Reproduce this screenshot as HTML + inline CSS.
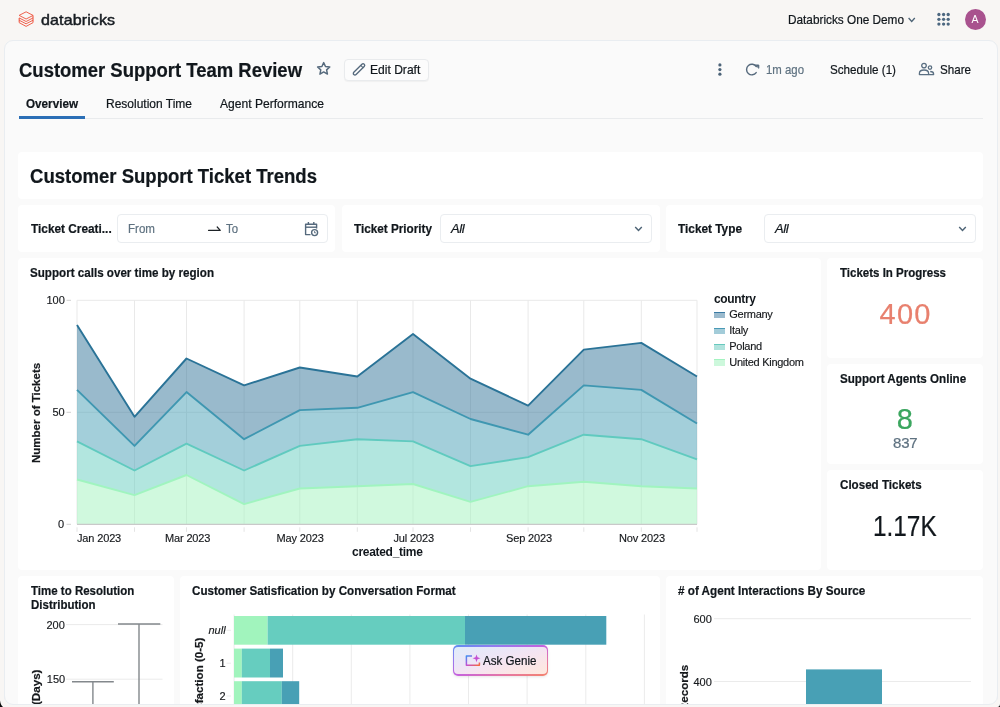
<!DOCTYPE html>
<html>
<head>
<meta charset="utf-8">
<title>Customer Support Team Review</title>
<style>
*{box-sizing:border-box;margin:0;padding:0}
html,body{width:1000px;height:707px;overflow:hidden;background:#f8f6f4;font-family:"Liberation Sans",sans-serif;color:#11171c}
#root{position:absolute;left:0;top:0;width:1000px;height:707px;overflow:hidden;background:#f8f6f4;will-change:transform}
.abs{position:absolute}
.t{position:absolute;white-space:nowrap;line-height:1;font-size:13px;transform-origin:0 50%;-webkit-text-stroke:0.22px currentColor}
.b{font-weight:bold}
.g{color:#5f7281}
.ax{font-size:11px;color:#16191c;-webkit-text-stroke:0.15px currentColor}
.nx{-webkit-text-stroke:0}
#panel{position:absolute;left:4px;top:40px;width:994px;height:680px;background:#fafafa;border:1px solid #e9edf1;border-radius:9px}
.card{position:absolute;background:#fff;border-radius:4px}
.inp{position:absolute;background:#fff;border:1px solid #eaedf0;border-radius:4px}
svg{position:absolute;overflow:visible}
.rot{position:absolute;white-space:nowrap;line-height:1;font-size:11.6px;font-weight:bold;transform-origin:0 0;transform:rotate(-90deg);-webkit-text-stroke:0.2px currentColor;color:#16191c}
</style>
</head>
<body>
<div id="root">
<!-- TOP BAR -->
<svg id="logo" style="left:18px;top:11px" width="17" height="17" viewBox="0 0 17 17" fill="none" stroke="#ee5a45" stroke-width="0.95" stroke-linejoin="round">
<path d="M8.1 0.8 L15.1 4.4 L8.1 8 L1.1 4.4 Z"/>
<path d="M1.1 6.9 L8.1 10.5 L15.1 6.9"/>
<path d="M1.1 9.2 L8.1 12.8 L15.1 9.2"/>
<path d="M1.1 11.6 L8.1 15.4 L15.1 11.6"/>
<path d="M1.2 6.9 V11.6 M15 4.6 V11.6" stroke-width="1.1"/>
</svg>
<div class="t" id="brand" style="left:41px;top:12px;font-size:15px;letter-spacing:0.1px;color:#161b20;-webkit-text-stroke:0.45px #161b20;transform:scaleX(1.07)">databricks</div>
<div class="t" id="ws" style="left:788px;top:13px;transform:scaleX(0.9070)">Databricks One Demo</div>
<svg style="left:907px;top:16px" width="10" height="8" viewBox="0 0 10 8" fill="none" stroke="#4d6375" stroke-width="1.3"><path d="M1.6 2 L4.7 5.5 L7.8 2"/></svg>
<svg style="left:936px;top:12px" width="15" height="15" viewBox="0 0 15 15" fill="#4d6880">
<circle cx="2.9" cy="2.5" r="1.65"/><circle cx="7.6" cy="2.5" r="1.65"/><circle cx="12.2" cy="2.5" r="1.65"/>
<circle cx="2.9" cy="7.3" r="1.65"/><circle cx="7.6" cy="7.3" r="1.65"/><circle cx="12.2" cy="7.3" r="1.65"/>
<circle cx="2.9" cy="12.1" r="1.65"/><circle cx="7.6" cy="12.1" r="1.65"/><circle cx="12.2" cy="12.1" r="1.65"/>
</svg>
<div class="abs" style="left:964.5px;top:8.5px;width:21.5px;height:21.5px;border-radius:50%;background:#a9528e"></div>
<div class="t nx" id="ava" style="left:971.6px;top:14.2px;font-size:10.5px;color:#fff">A</div>

<div id="panel"></div>

<!-- HEADER -->
<div class="t b" id="title" style="left:19px;top:60px;font-size:20px;transform:scaleX(0.9238)">Customer Support Team Review</div>
<svg style="left:316px;top:61.2px" width="15" height="15" viewBox="0 0 16 16" fill="none" stroke="#55697c" stroke-width="1.55" stroke-linejoin="round"><path d="M8.2 1.7 L10.1 5.9 L14.7 6.4 L11.3 9.5 L12.2 14 L8.2 11.7 L4.2 14 L5.1 9.5 L1.7 6.4 L6.3 5.9 Z"/></svg>
<div class="abs" id="editbtn" style="left:344px;top:59px;width:85px;height:22px;border:1px solid #e9ebed;border-radius:4px;background:#fcfcfc;box-shadow:0 1px 1px rgba(0,0,0,0.04)"></div>
<svg style="left:352.2px;top:62px" width="14.3" height="14.3" viewBox="0 0 15 15" fill="none" stroke="#55697c" stroke-width="1.4" stroke-linejoin="round" stroke-linecap="round"><path d="M1.9 10.8 L10.4 2.3 A1.65 1.65 0 0 1 12.8 4.7 L4.3 13.2 A1.65 1.65 0 0 1 1.9 10.8 Z"/><path d="M9.2 3.6 L11.5 5.9" stroke-width="1.1"/></svg>
<div class="t" id="edittxt" style="left:370.4px;top:63px;transform:scaleX(0.9283)">Edit Draft</div>
<svg style="left:716px;top:62px" width="8" height="16" viewBox="0 0 8 16" fill="#4c6378"><circle cx="3.9" cy="2.9" r="1.6"/><circle cx="3.9" cy="7.55" r="1.6"/><circle cx="3.9" cy="12.2" r="1.6"/></svg>
<svg style="left:745px;top:62px" width="16" height="16" viewBox="0 0 16 16" fill="none" stroke="#55697c" stroke-width="1.4" stroke-linecap="round" stroke-linejoin="round"><path d="M11.3 4.6 A5.3 5.3 0 1 0 11.2 10.6"/><path d="M10.9 3 H13.8 V5.9 Z" fill="#55697c" stroke-width="1"/></svg>
<div class="t g" id="ago" style="left:766px;top:63px;transform:scaleX(0.8761)">1m ago</div>
<div class="t" id="sched" style="left:830px;top:63px;transform:scaleX(0.8953)">Schedule (1)</div>
<svg style="left:918px;top:62px" width="17" height="14" viewBox="0 0 17 14" fill="none" stroke="#5a6f82" stroke-width="1.3"><circle cx="6" cy="3.6" r="2.3"/><path d="M1.4 12.6 V11.5 C1.4 9.2 3.4 8 6 8 C8.6 8 10.6 9.2 10.6 11.5 V12.6 Z" stroke-linejoin="round"/><circle cx="12" cy="5.6" r="1.7"/><path d="M10.6 12.6 H15.6 V11.9 C15.6 10.3 14 9.5 12.2 9.5" stroke-linejoin="round"/></svg>
<div class="t" id="share" style="left:939.7px;top:63px;transform:scaleX(0.8933)">Share</div>

<!-- TABS -->
<div class="abs" style="left:19px;top:118px;width:964px;height:1px;background:#e9ebed"></div>
<div class="abs" style="left:19px;top:116.4px;width:66px;height:2.6px;background:#2b6fb6"></div>
<div class="t b" id="tab1" style="left:26px;top:97px;transform:scaleX(0.8992)">Overview</div>
<div class="t" id="tab2" style="left:106px;top:97px;transform:scaleX(0.9226)">Resolution Time</div>
<div class="t" id="tab3" style="left:220px;top:97px;transform:scaleX(0.9284)">Agent Performance</div>

<!-- TITLE CARD -->
<div class="card" style="left:18px;top:152px;width:965px;height:47px"></div>
<div class="t b" id="h1" style="left:30px;top:166px;font-size:20px;transform:scaleX(0.9267)">Customer Support Ticket Trends</div>

<!-- FILTERS -->
<div class="card" style="left:18px;top:205px;width:317px;height:47px"></div>
<div class="card" style="left:342px;top:205px;width:318px;height:47px"></div>
<div class="card" style="left:666px;top:205px;width:317px;height:47px"></div>
<div class="t b" id="f1" style="left:30.7px;top:222px;transform:scaleX(0.9104)">Ticket Creati...</div>
<div class="inp" style="left:116.5px;top:214px;width:211px;height:29px"></div>
<div class="t g" id="from" style="left:128px;top:222px;transform:scaleX(0.8898)">From</div>
<svg style="left:207px;top:224px" width="15" height="9" viewBox="0 0 15 9" fill="none" stroke="#1d2226" stroke-width="1.2" stroke-linecap="round" stroke-linejoin="round"><path d="M1.5 6.3 H13.3 L10.2 3"/></svg>
<div class="t g" id="to" style="left:226.4px;top:222px;transform:scaleX(0.8737)">To</div>
<svg style="left:304px;top:220.5px" width="16" height="16" viewBox="0 0 16 16" fill="none" stroke="#55697c" stroke-width="1.4" stroke-linejoin="round"><path d="M6.5 13.6 H1.6 V3.2 H12.6 V7.4"/><path d="M1.6 6.2 H12.6"/><path d="M4.4 1 V4 M9.8 1 V4"/><circle cx="10.6" cy="11.6" r="3"/><path d="M10.6 10.2 V11.8 H11.8" stroke-width="1"/></svg>

<div class="t b" id="f2" style="left:354px;top:222px;transform:scaleX(0.9021)">Ticket Priority</div>
<div class="inp" style="left:440px;top:214px;width:211.5px;height:29px"></div>
<div class="t" id="all1" style="left:451px;top:222px;font-style:italic;letter-spacing:-0.4px">All</div>
<svg style="left:633px;top:225px" width="11" height="8" viewBox="0 0 11 8" fill="none" stroke="#4d6375" stroke-width="1.45"><path d="M2.2 2 L5.5 5.4 L8.8 2"/></svg>

<div class="t b" id="f3" style="left:678px;top:222px;transform:scaleX(0.9100)">Ticket Type</div>
<div class="inp" style="left:764px;top:214px;width:211.5px;height:29px"></div>
<div class="t" id="all2" style="left:775px;top:222px;font-style:italic;letter-spacing:-0.4px">All</div>
<svg style="left:957px;top:225px" width="11" height="8" viewBox="0 0 11 8" fill="none" stroke="#4d6375" stroke-width="1.45"><path d="M2.2 2 L5.5 5.4 L8.8 2"/></svg>

<!-- AREA CHART CARD -->
<div class="card" style="left:18px;top:258px;width:803px;height:312px"></div>
<div class="t b" id="c1t" style="left:30px;top:266px;transform:scaleX(0.8937)">Support calls over time by region</div>
<svg style="left:0;top:0" width="1000" height="707" viewBox="0 0 1000 707">
<line x1="77.0" y1="300.3" x2="77.0" y2="524.3" stroke="#e9e9e9" stroke-width="1"/>
<line x1="134.5" y1="300.3" x2="134.5" y2="524.3" stroke="#e9e9e9" stroke-width="1"/>
<line x1="186.5" y1="300.3" x2="186.5" y2="524.3" stroke="#e9e9e9" stroke-width="1"/>
<line x1="244.1" y1="300.3" x2="244.1" y2="524.3" stroke="#e9e9e9" stroke-width="1"/>
<line x1="299.8" y1="300.3" x2="299.8" y2="524.3" stroke="#e9e9e9" stroke-width="1"/>
<line x1="357.3" y1="300.3" x2="357.3" y2="524.3" stroke="#e9e9e9" stroke-width="1"/>
<line x1="413.0" y1="300.3" x2="413.0" y2="524.3" stroke="#e9e9e9" stroke-width="1"/>
<line x1="470.5" y1="300.3" x2="470.5" y2="524.3" stroke="#e9e9e9" stroke-width="1"/>
<line x1="528.1" y1="300.3" x2="528.1" y2="524.3" stroke="#e9e9e9" stroke-width="1"/>
<line x1="583.8" y1="300.3" x2="583.8" y2="524.3" stroke="#e9e9e9" stroke-width="1"/>
<line x1="641.3" y1="300.3" x2="641.3" y2="524.3" stroke="#e9e9e9" stroke-width="1"/>
<line x1="697.0" y1="300.3" x2="697.0" y2="524.3" stroke="#e9e9e9" stroke-width="1"/>
<line x1="77.0" y1="412.3" x2="697.0" y2="412.3" stroke="#e9e9e9" stroke-width="1"/>
<line x1="77.0" y1="300.3" x2="697.0" y2="300.3" stroke="#e9e9e9" stroke-width="1"/>
<path d="M77.0,479.5 L134.5,495.2 L186.5,475.0 L244.1,504.1 L299.8,488.5 L357.3,486.2 L413.0,484.0 L470.5,501.9 L528.1,486.2 L583.8,481.7 L641.3,486.2 L697.0,488.5 L697.0,524.3 L641.3,524.3 L583.8,524.3 L528.1,524.3 L470.5,524.3 L413.0,524.3 L357.3,524.3 L299.8,524.3 L244.1,524.3 L186.5,524.3 L134.5,524.3 L77.0,524.3 Z" fill="#a1f4bd" fill-opacity="0.5"/>
<path d="M77.0,441.4 L134.5,470.5 L186.5,443.7 L244.1,470.5 L299.8,445.9 L357.3,439.2 L413.0,441.4 L470.5,466.1 L528.1,457.1 L583.8,434.7 L641.3,439.2 L697.0,459.3 L697.0,488.5 L641.3,486.2 L583.8,481.7 L528.1,486.2 L470.5,501.9 L413.0,484.0 L357.3,486.2 L299.8,488.5 L244.1,504.1 L186.5,475.0 L134.5,495.2 L77.0,479.5 Z" fill="#66cdbf" fill-opacity="0.5"/>
<path d="M77.0,389.9 L134.5,445.9 L186.5,392.1 L244.1,439.2 L299.8,410.1 L357.3,407.8 L413.0,392.1 L470.5,419.0 L528.1,434.7 L583.8,385.4 L641.3,389.9 L697.0,423.5 L697.0,459.3 L641.3,439.2 L583.8,434.7 L528.1,457.1 L470.5,466.1 L413.0,441.4 L357.3,439.2 L299.8,445.9 L244.1,470.5 L186.5,443.7 L134.5,470.5 L77.0,441.4 Z" fill="#48a0b5" fill-opacity="0.5"/>
<path d="M77.0,324.9 L134.5,416.8 L186.5,358.5 L244.1,385.4 L299.8,367.5 L357.3,376.5 L413.0,333.9 L470.5,378.7 L528.1,405.6 L583.8,349.6 L641.3,342.9 L697.0,376.5 L697.0,423.5 L641.3,389.9 L583.8,385.4 L528.1,434.7 L470.5,419.0 L413.0,392.1 L357.3,407.8 L299.8,410.1 L244.1,439.2 L186.5,392.1 L134.5,445.9 L77.0,389.9 Z" fill="#33759a" fill-opacity="0.5"/>
<path d="M77.0,479.5 L134.5,495.2 L186.5,475.0 L244.1,504.1 L299.8,488.5 L357.3,486.2 L413.0,484.0 L470.5,501.9 L528.1,486.2 L583.8,481.7 L641.3,486.2 L697.0,488.5" fill="none" stroke="#a0f4bf" stroke-width="1.9" stroke-linejoin="round"/>
<path d="M77.0,441.4 L134.5,470.5 L186.5,443.7 L244.1,470.5 L299.8,445.9 L357.3,439.2 L413.0,441.4 L470.5,466.1 L528.1,457.1 L583.8,434.7 L641.3,439.2 L697.0,459.3" fill="none" stroke="#60cabf" stroke-width="1.9" stroke-linejoin="round"/>
<path d="M77.0,389.9 L134.5,445.9 L186.5,392.1 L244.1,439.2 L299.8,410.1 L357.3,407.8 L413.0,392.1 L470.5,419.0 L528.1,434.7 L583.8,385.4 L641.3,389.9 L697.0,423.5" fill="none" stroke="#3f97b1" stroke-width="1.9" stroke-linejoin="round"/>
<path d="M77.0,324.9 L134.5,416.8 L186.5,358.5 L244.1,385.4 L299.8,367.5 L357.3,376.5 L413.0,333.9 L470.5,378.7 L528.1,405.6 L583.8,349.6 L641.3,342.9 L697.0,376.5" fill="none" stroke="#2a7397" stroke-width="1.9" stroke-linejoin="round"/>
<line x1="77.0" y1="524.3" x2="697.0" y2="524.3" stroke="#c9c9c9" stroke-width="1.2"/>
<line x1="77.0" y1="527.3" x2="77.0" y2="531.8" stroke="#e4e4e4" stroke-width="1"/>
<line x1="134.5" y1="527.3" x2="134.5" y2="531.8" stroke="#e4e4e4" stroke-width="1"/>
<line x1="186.5" y1="527.3" x2="186.5" y2="531.8" stroke="#e4e4e4" stroke-width="1"/>
<line x1="244.1" y1="527.3" x2="244.1" y2="531.8" stroke="#e4e4e4" stroke-width="1"/>
<line x1="299.8" y1="527.3" x2="299.8" y2="531.8" stroke="#e4e4e4" stroke-width="1"/>
<line x1="357.3" y1="527.3" x2="357.3" y2="531.8" stroke="#e4e4e4" stroke-width="1"/>
<line x1="413.0" y1="527.3" x2="413.0" y2="531.8" stroke="#e4e4e4" stroke-width="1"/>
<line x1="470.5" y1="527.3" x2="470.5" y2="531.8" stroke="#e4e4e4" stroke-width="1"/>
<line x1="528.1" y1="527.3" x2="528.1" y2="531.8" stroke="#e4e4e4" stroke-width="1"/>
<line x1="583.8" y1="527.3" x2="583.8" y2="531.8" stroke="#e4e4e4" stroke-width="1"/>
<line x1="641.3" y1="527.3" x2="641.3" y2="531.8" stroke="#e4e4e4" stroke-width="1"/>
<line x1="697.0" y1="527.3" x2="697.0" y2="531.8" stroke="#e4e4e4" stroke-width="1"/>
<line x1="66.5" y1="524.3" x2="71" y2="524.3" stroke="#d0d0d0" stroke-width="1"/>
<line x1="66.5" y1="412.3" x2="71" y2="412.3" stroke="#d0d0d0" stroke-width="1"/>
<line x1="66.5" y1="300.3" x2="71" y2="300.3" stroke="#d0d0d0" stroke-width="1"/>

</svg>
<div class="t ax" id="y100" style="left:46.5px;top:295px">100</div>
<div class="t ax" id="y50" style="left:52.5px;top:407px">50</div>
<div class="t ax" id="y0" style="left:58px;top:519px">0</div>
<div class="rot" id="ylab" style="left:31px;top:462.5px;font-size:11.5px">Number of Tickets</div>
<div class="t ax" id="m1" style="left:77px;top:532.7px;font-size:11px;letter-spacing:-0.15px">Jan 2023</div>
<div class="t ax" id="m3" style="left:165px;top:532.7px;font-size:11px;letter-spacing:-0.15px">Mar 2023</div>
<div class="t ax" id="m5" style="left:276.5px;top:532.7px;font-size:11px;letter-spacing:-0.15px">May 2023</div>
<div class="t ax" id="m7" style="left:393.5px;top:532.7px;font-size:11px;letter-spacing:-0.15px">Jul 2023</div>
<div class="t ax" id="m9" style="left:506px;top:532.7px;font-size:11px;letter-spacing:-0.15px">Sep 2023</div>
<div class="t ax" id="m11" style="left:619px;top:532.7px;font-size:11px;letter-spacing:-0.15px">Nov 2023</div>
<div class="t b nx" id="xlab" style="left:352px;top:546px;font-size:12px;letter-spacing:-0.29px">created_time</div>
<!-- legend -->
<div class="t b nx" id="lgt" style="left:714px;top:293px;font-size:12px;letter-spacing:-0.35px">country</div>
<div class="abs" style="left:714px;top:312px;width:10.5px;height:6.2px;background:#9bbacd;border-top:1.5px solid #3b7ba4"></div>
<div class="abs" style="left:714px;top:327.8px;width:10.5px;height:6.2px;background:#a3ccd9;border-top:1.5px solid #4a9ab6"></div>
<div class="abs" style="left:714px;top:343.6px;width:10.5px;height:6.2px;background:#b1e3dd;border-top:1.5px solid #67c9be"></div>
<div class="abs" style="left:714px;top:359.4px;width:10.5px;height:6.2px;background:#cdf8dc;border-top:1.5px solid #a3f3c0"></div>
<div class="t ax" id="lg1" style="left:729.3px;top:309.1px;letter-spacing:-0.28px">Germany</div>
<div class="t ax" id="lg2" style="left:729.3px;top:324.9px;letter-spacing:-0.28px">Italy</div>
<div class="t ax" id="lg3" style="left:729.3px;top:340.7px;letter-spacing:-0.28px">Poland</div>
<div class="t ax" id="lg4" style="left:729.3px;top:356.5px;letter-spacing:-0.28px">United Kingdom</div>

<!-- KPI CARDS -->
<div class="card" style="left:827px;top:258px;width:156px;height:100px"></div>
<div class="card" style="left:827px;top:364px;width:156px;height:100px"></div>
<div class="card" style="left:827px;top:470px;width:156px;height:100px"></div>
<div class="t b" id="k1t" style="left:840.3px;top:266px;transform:scaleX(0.8854)">Tickets In Progress</div>
<div class="t" id="k1v" style="left:879.5px;top:300.2px;font-size:29px;color:#e8806e;letter-spacing:1.3px">400</div>
<div class="t b" id="k2t" style="left:839.8px;top:372px;transform:scaleX(0.8945)">Support Agents Online</div>
<div class="t" id="k2v" style="left:896.8px;top:405.3px;font-size:29px;color:#3ba65f">8</div>
<div class="t g" id="k2s" style="left:893px;top:435.2px;font-size:15px;letter-spacing:-0.2px">837</div>
<div class="t b" id="k3t" style="left:839.8px;top:478px;transform:scaleX(0.8926)">Closed Tickets</div>
<div class="t" id="k3v" style="left:873px;top:512.3px;font-size:29px;color:#11171c;transform:scaleX(0.84)">1.17K</div>

<!-- BOTTOM ROW -->
<div class="card" style="left:18px;top:576px;width:156px;height:140px"></div>
<div class="card" style="left:180px;top:576px;width:480px;height:140px"></div>
<div class="card" style="left:666px;top:576px;width:317px;height:140px"></div>

<div class="t b" id="b1t" style="left:30.7px;top:584px;line-height:13.8px;transform:scaleX(0.885)">Time to Resolution<br>Distribution</div>
<svg style="left:0;top:0" width="1000" height="707" viewBox="0 0 1000 707">
<line x1="66" y1="624.6" x2="162.5" y2="624.6" stroke="#ebebeb"/>
<line x1="66" y1="679.2" x2="162.5" y2="679.2" stroke="#ebebeb"/>
<g stroke="#83888c" stroke-width="1.4" fill="none">
<path d="M72 681.8 H113.8 M92.9 681.8 V720"/>
<path d="M118 624 H160.3 M139 624 V720"/>
</g>
<!-- sat bars grid -->
<g stroke="#ebebeb">
<line x1="234.1" y1="614.5" x2="234.1" y2="720"/><line x1="292.7" y1="614.5" x2="292.7" y2="720"/><line x1="351.3" y1="614.5" x2="351.3" y2="720"/>
<line x1="409.9" y1="614.5" x2="409.9" y2="720"/><line x1="468.5" y1="614.5" x2="468.5" y2="720"/><line x1="527.1" y1="614.5" x2="527.1" y2="720"/>
<line x1="585.8" y1="614.5" x2="585.8" y2="720"/><line x1="644.4" y1="614.5" x2="644.4" y2="720"/>
<line x1="226.5" y1="630.3" x2="231" y2="630.3"/><line x1="226.5" y1="663.2" x2="231" y2="663.2"/><line x1="226.5" y1="696" x2="231" y2="696"/>
</g>
<rect x="234" y="616" width="33.6" height="28.7" fill="#a1f4bd"/>
<rect x="267.6" y="616" width="197.4" height="28.7" fill="#66cdbf"/>
<rect x="465" y="616" width="141.3" height="28.7" fill="#48a0b5"/>
<rect x="234" y="648.6" width="7.8" height="28.9" fill="#a1f4bd"/>
<rect x="241.8" y="648.6" width="28.2" height="28.9" fill="#66cdbf"/>
<rect x="270" y="648.6" width="13" height="28.9" fill="#48a0b5"/>
<rect x="234" y="681.2" width="7.8" height="28.9" fill="#a1f4bd"/>
<rect x="241.8" y="681.2" width="40" height="28.9" fill="#66cdbf"/>
<rect x="281.8" y="681.2" width="17.4" height="28.9" fill="#48a0b5"/>
<!-- records chart -->
<line x1="714" y1="618.7" x2="971" y2="618.7" stroke="#ebebeb"/>
<line x1="714" y1="681.5" x2="971" y2="681.5" stroke="#ebebeb"/>
<rect x="806" y="669.4" width="76" height="50" fill="#48a0b5"/>
</svg>
<div class="t ax" id="t200" style="left:46.5px;top:619.5px">200</div>
<div class="t ax" id="t150" style="left:46.8px;top:673.7px">150</div>
<div class="rot" id="days" style="left:30.4px;top:705px">(Days)</div>

<div class="t b" id="b2t" style="left:192.4px;top:584px;transform:scaleX(0.8944)">Customer Satisfication by Conversation Format</div>
<div class="t ax" id="null" style="left:208.5px;top:625px;font-style:italic">null</div>
<div class="t ax" id="n1" style="left:219.5px;top:658px">1</div>
<div class="t ax" id="n2" style="left:219.5px;top:691px">2</div>
<div class="rot" id="satis" style="left:192.8px;top:730.5px">Satisfaction (0-5)</div>

<div class="t b" id="b3t" style="left:677.7px;top:584px;transform:scaleX(0.8993)"># of Agent Interactions By Source</div>
<div class="t ax" id="t600" style="left:693.5px;top:613.5px">600</div>
<div class="t ax" id="t400" style="left:693.5px;top:676.5px">400</div>
<div class="rot" id="recs" style="left:677.8px;top:761.5px">Count of Records</div>

<!-- ASK GENIE -->
<div class="abs" id="genie" style="left:453.2px;top:645.4px;width:95px;height:30.3px;border-radius:5px;background:linear-gradient(to bottom right,#5b8ff0 0%,#8f7df0 22%,#c562de 50%,#e577a4 75%,#f4846b 100%);box-shadow:0 1px 3px rgba(0,0,0,0.10)"></div>
<div class="abs" style="left:454.4px;top:646.6px;width:92.6px;height:27.9px;border-radius:4px;background:linear-gradient(to bottom right,#e0ecfa 0%,#ece6f7 35%,#f5e4f1 55%,#fbe6e6 78%,#fee9df 100%)"></div>
<svg style="left:464.5px;top:653.7px" width="16" height="15" viewBox="0 0 16 15" fill="none" stroke-width="1.5" stroke-linejoin="round"><defs><linearGradient id="gg" x1="0" y1="0" x2="1" y2="1"><stop offset="0" stop-color="#3f8ff0"/><stop offset="0.5" stop-color="#c24fd6"/><stop offset="1" stop-color="#f56a3a"/></linearGradient></defs><path d="M7 2.1 H1.4 V11.3 H14.4 V8.6" stroke="url(#gg)"/><path d="M11.5 0.4 L12.5 3.3 L15.4 4.3 L12.5 5.3 L11.5 8.2 L10.5 5.3 L7.6 4.3 L10.5 3.3 Z" fill="#c44fd2" stroke="none"/></svg>
<div class="t" id="genietxt" style="left:483px;top:654.1px;transform:scaleX(0.8902)">Ask Genie</div>

<!-- window bottom edge / corners -->
<div class="abs" style="left:0;top:680px;width:1000px;height:27px;overflow:hidden;pointer-events:none">
<div class="abs" style="left:4px;top:-640px;width:994px;height:664.6px;border:1px solid #e9edf1;border-radius:9px;box-shadow:0 0 0 30px #f8f6f4"></div>
</div>
<svg style="left:0;top:697px" width="10" height="10" viewBox="0 0 10 10"><path d="M0 3.5 C0.4 6.5 1.2 8.6 3 10 L0 10 Z" fill="#0a0a0a"/></svg>
<svg style="left:994px;top:701px" width="6" height="6" viewBox="0 0 6 6"><path d="M6 3 C6 4.8 5 6 3.5 6 L6 6 Z" fill="#0a0a0a"/></svg>
</div>
</body>
</html>
